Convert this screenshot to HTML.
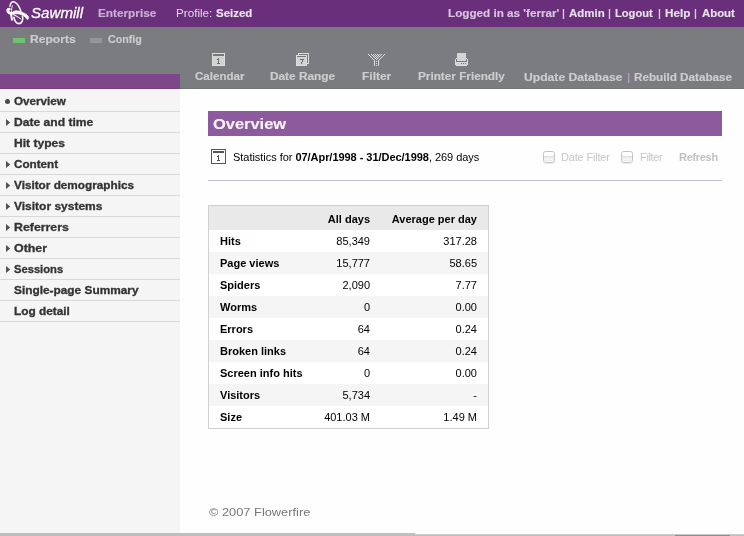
<!DOCTYPE html>
<html>
<head>
<meta charset="utf-8">
<title>Sawmill - Overview</title>
<style>
html,body{margin:0;padding:0;}
body{width:744px;height:536px;overflow:hidden;background:#fefefe;font-family:"Liberation Sans",sans-serif;position:relative;}
#wrap{position:absolute;left:0;top:0;width:744px;height:536px;overflow:hidden;opacity:0.999;will-change:transform;}
.abs{position:absolute;white-space:nowrap;}
.t{position:absolute;white-space:pre;font-family:"Liberation Sans",sans-serif;}
#topbar{left:0;top:0;width:744px;height:27px;background:#6a2f7a;}
#greybar{left:0;top:27px;width:744px;height:62px;background:#7a7c7f;}
#sidebar{left:0;top:89px;width:180px;height:447px;background:#f5f5f5;}
#sidepurple{left:0;top:74px;width:180px;height:15px;background:#7d4789;}
.sep{left:0;width:180px;height:1px;background:#d9d9d9;}
#ovh{left:208px;top:111px;width:514px;height:25px;background:#8d5a9d;}
.cb{top:151px;width:10px;height:10px;border:1px solid #c4c4c4;border-radius:2.5px;background:linear-gradient(#fff 0%,#fdfdfd 38%,#e1e1e1 46%,#e9e9e9 56%,#f4f4f4 68%,#f4f4f4 78%,#e9e9e9 86%,#fff 96%);box-shadow:0 1px 0 #ececec;}
#tbl{left:208px;top:205px;width:279px;height:222px;border:1px solid #cfcfcf;background:#fff;font-size:11px;color:#000;}
.tr{position:absolute;left:0;width:279px;height:22px;line-height:22px;}
.tr.alt{background:#f5f5f5;}
.tr.th{background:#e9e9e9;line-height:26px;font-weight:bold;}
.c1{position:absolute;left:11px;font-weight:bold;}
.c2{position:absolute;right:118px;}
.c3{position:absolute;right:11px;}
</style>
</head>
<body>
<div id="wrap">
<div class="abs" id="topbar"></div>
<div class="abs" id="greybar"></div>
<div class="abs" id="sidebar"></div>
<div class="abs" id="sidepurple"></div>
<div class="abs" style="left:0;top:88px;width:180px;height:1px;background:#793f85;"></div>
<div class="abs" style="left:180px;top:88px;width:564px;height:1px;background:#737477;"></div>
<div class="abs" style="left:0;top:89px;width:180px;height:1px;background:#fefefe;"></div>
<div class="abs" id="ovh"></div>

<!-- logo -->
<svg class="abs" style="left:0;top:0;" width="32" height="27" viewBox="0 0 32 27" fill="none" stroke="#fff" stroke-linecap="round" stroke-linejoin="round">
<path d="M13 11.8 C15 10.2 18 10.4 21.4 12 C24.5 13 27.5 14.8 28.8 17.2 C28.6 18.4 28 19.2 27.2 19.6 C26 17.4 24 15.8 21.5 14.8 C19 13.8 16 13.2 13.6 14.2 Z" fill="#fff" stroke="#fff" stroke-width="0.7"/>
<path d="M9.4 9.2 C8 8.8 7.2 9.8 7.6 11 C8.1 12.4 9.8 13.3 11.6 13.5 L13.6 13" stroke-width="2.5"/>
<path d="M12.4 5.6 C11.4 9 11 14 11.9 19.8" stroke-width="1.1" opacity="0.8"/>
<path d="M11.1 13 C11.1 16 11.5 18 11.9 19.8" stroke-width="1.9"/>
<path d="M10 6.2 C10.2 2.6 12.6 1 14.8 2.2 C17.6 4 20 8 20.9 11.6" stroke-width="1.5"/>
<path d="M13.9 17.4 C14.2 20.6 16.5 23.6 19 23.6 C21.8 23.6 23.4 20 22.5 16.4" stroke-width="1.6"/>
<path d="M13.6 14.8 C16 15.6 18.5 17.4 20.4 18.7" stroke-width="1.1" opacity="0.9"/>
</svg>

<!-- tab markers -->
<div class="abs" style="left:13px;top:38px;width:12px;height:5px;background:#6fc36f;"></div>
<div class="abs" style="left:90px;top:38px;width:12px;height:5px;background:#959597;"></div>

<div class="abs" style="left:628px;top:73px;width:1px;height:10px;background:#b99cc5;"></div>
<div class="abs" style="left:629px;top:73px;width:1px;height:10px;background:#8e8594;"></div>
<!-- toolbar icons -->
<svg class="abs" style="left:212px;top:53px;" width="13" height="13" viewBox="0 0 13 13" shape-rendering="crispEdges">
<rect x="0" y="0" width="13" height="13" fill="#dedede"/><rect x="1" y="1" width="11" height="11" fill="#d2d2d2"/>
<rect x="1" y="1" width="11" height="2" fill="#77777a"/>
<path d="M6 5h1v5h1v1h-3v-1h1v-3h-1v-1h1z" fill="#6d6d70"/>
</svg>
<svg class="abs" style="left:296px;top:53px;" width="13" height="13" viewBox="0 0 13 13" shape-rendering="crispEdges">
<rect x="2" y="0" width="11" height="11" fill="#dedede"/><rect x="3" y="1" width="9" height="9" fill="#77777a"/><rect x="3" y="2" width="8" height="8" fill="#c4c4c4"/>
<rect x="0" y="2" width="11" height="11" fill="#dedede"/><rect x="1" y="3" width="9" height="9" fill="#d2d2d2"/>
<rect x="1" y="3" width="9" height="1" fill="#77777a"/>
<path d="M4 6h4v1h-1v2h-1v2h-1v-2h1v-2h-2z" fill="#6d6d70"/>
</svg>
<svg class="abs" style="left:366px;top:52px;" width="21" height="16" viewBox="0 0 21 16" shape-rendering="crispEdges" fill="#dcdcdc"><rect x="2" y="2" width="1" height="1"/><rect x="18" y="2" width="1" height="1"/><rect x="3" y="3" width="1" height="1"/><rect x="17" y="3" width="1" height="1"/><rect x="4" y="4" width="1" height="1"/><rect x="16" y="4" width="1" height="1"/><rect x="5" y="5" width="1" height="1"/><rect x="15" y="5" width="1" height="1"/><rect x="6" y="6" width="1" height="1"/><rect x="14" y="6" width="1" height="1"/><rect x="7" y="7" width="1" height="1"/><rect x="13" y="7" width="1" height="1"/><rect x="8" y="8" width="1" height="1"/><rect x="12" y="8" width="1" height="1"/><rect x="5" y="2" width="1" height="1"/><rect x="7" y="2" width="1" height="1"/><rect x="9" y="2" width="1" height="1"/><rect x="11" y="2" width="1" height="1"/><rect x="13" y="2" width="1" height="1"/><rect x="15" y="2" width="1" height="1"/><rect x="6" y="3" width="1" height="1"/><rect x="8" y="3" width="1" height="1"/><rect x="10" y="3" width="1" height="1"/><rect x="12" y="3" width="1" height="1"/><rect x="14" y="3" width="1" height="1"/><rect x="7" y="4" width="1" height="1"/><rect x="9" y="4" width="1" height="1"/><rect x="11" y="4" width="1" height="1"/><rect x="13" y="4" width="1" height="1"/><rect x="8" y="5" width="1" height="1"/><rect x="10" y="5" width="1" height="1"/><rect x="12" y="5" width="1" height="1"/><rect x="9" y="6" width="1" height="1"/><rect x="11" y="6" width="1" height="1"/><rect x="10" y="7" width="1" height="1"/><rect x="10" y="9" width="1" height="1"/><rect x="10" y="11" width="1" height="1"/><rect x="10" y="13" width="1" height="1"/><rect x="8" y="8" width="1" height="6"/><rect x="12" y="8" width="1" height="6"/></svg>
<svg class="abs" style="left:455px;top:53px;" width="13" height="13" viewBox="0 0 13 13" shape-rendering="crispEdges">
<path d="M0 6h1v-1h11v1h1v6h-1v1h-11v-1h-1z" fill="#dedede"/>
<rect x="1" y="6" width="11" height="3" fill="#77777a"/>
<rect x="2" y="0" width="9" height="8" fill="#d4d4d4"/>
<rect x="1" y="10" width="11" height="2" fill="#d2d2d2"/>
<rect x="6" y="10" width="1" height="1" fill="#77777a"/><rect x="8" y="10" width="1" height="1" fill="#77777a"/><rect x="10" y="10" width="1" height="1" fill="#77777a"/>
</svg>

<!-- menu separators and bullets -->
<div class="abs sep" style="top:111px;"></div>
<i class="abs" style="left:5px;top:99px;width:5px;height:5px;border-radius:3px;background:#4a4a4a;"></i>
<div class="abs sep" style="top:132px;"></div>
<svg class="abs" style="left:6px;top:119px;" width="5" height="7" viewBox="0 0 5 7"><path d="M0 0L4.2 3.5L0 7z" fill="#505050"/></svg>
<div class="abs sep" style="top:153px;"></div>
<div class="abs sep" style="top:174px;"></div>
<svg class="abs" style="left:6px;top:161px;" width="5" height="7" viewBox="0 0 5 7"><path d="M0 0L4.2 3.5L0 7z" fill="#505050"/></svg>
<div class="abs sep" style="top:195px;"></div>
<svg class="abs" style="left:6px;top:182px;" width="5" height="7" viewBox="0 0 5 7"><path d="M0 0L4.2 3.5L0 7z" fill="#505050"/></svg>
<div class="abs sep" style="top:216px;"></div>
<svg class="abs" style="left:6px;top:203px;" width="5" height="7" viewBox="0 0 5 7"><path d="M0 0L4.2 3.5L0 7z" fill="#505050"/></svg>
<div class="abs sep" style="top:237px;"></div>
<svg class="abs" style="left:6px;top:224px;" width="5" height="7" viewBox="0 0 5 7"><path d="M0 0L4.2 3.5L0 7z" fill="#505050"/></svg>
<div class="abs sep" style="top:258px;"></div>
<svg class="abs" style="left:6px;top:245px;" width="5" height="7" viewBox="0 0 5 7"><path d="M0 0L4.2 3.5L0 7z" fill="#505050"/></svg>
<div class="abs sep" style="top:279px;"></div>
<svg class="abs" style="left:6px;top:266px;" width="5" height="7" viewBox="0 0 5 7"><path d="M0 0L4.2 3.5L0 7z" fill="#505050"/></svg>
<div class="abs sep" style="top:300px;"></div>
<div class="abs sep" style="top:321px;"></div>

<!-- stats line widgets -->
<svg class="abs" style="left:211px;top:149px;" width="15" height="15" viewBox="0 0 15 15" shape-rendering="crispEdges">
<rect x="0.5" y="0.5" width="14" height="14" fill="#fff" stroke="#555"/>
<rect x="2" y="2" width="11" height="2" fill="#555"/>
<path d="M7 6h1v5h1v1h-3v-1h1v-3h-1v-1h1z" fill="#555"/>
</svg>
<div class="abs cb" style="left:543px;"></div>
<div class="abs cb" style="left:621px;"></div>
<div class="abs" style="left:208px;top:180px;width:514px;height:1px;background:#c9bfd2;"></div>

<!-- table -->
<div class="abs" id="tbl">
<div class="tr th" style="top:0;height:24px;"><span class="c2">All days</span><span class="c3">Average per day</span></div>
<div class="tr" style="top:24px;"><span class="c1">Hits</span><span class="c2">85,349</span><span class="c3">317.28</span></div>
<div class="tr alt" style="top:46px;"><span class="c1">Page views</span><span class="c2">15,777</span><span class="c3">58.65</span></div>
<div class="tr" style="top:68px;"><span class="c1">Spiders</span><span class="c2">2,090</span><span class="c3">7.77</span></div>
<div class="tr alt" style="top:90px;"><span class="c1">Worms</span><span class="c2">0</span><span class="c3">0.00</span></div>
<div class="tr" style="top:112px;"><span class="c1">Errors</span><span class="c2">64</span><span class="c3">0.24</span></div>
<div class="tr alt" style="top:134px;"><span class="c1">Broken links</span><span class="c2">64</span><span class="c3">0.24</span></div>
<div class="tr" style="top:156px;"><span class="c1">Screen info hits</span><span class="c2">0</span><span class="c3">0.00</span></div>
<div class="tr alt" style="top:178px;"><span class="c1">Visitors</span><span class="c2">5,734</span><span class="c3">-</span></div>
<div class="tr" style="top:200px;"><span class="c1">Size</span><span class="c2">401.03 M</span><span class="c3">1.49 M</span></div>
</div>

<!-- all text -->
<div class="t" style="left:30.9px;top:3px;font-size:15.5px;line-height:19px;color:#fff;font-style:italic;transform:scaleX(0.975);transform-origin:0 0;-webkit-text-stroke:0.3px;">Sawmill</div>
<div class="t" style="left:98.0px;top:6px;font-size:10.5px;line-height:14px;color:#c9b2d1;font-weight:bold;-webkit-text-stroke:0.15px;transform:scaleX(1.122);transform-origin:0 0;">Enterprise</div>
<div class="t" style="left:175.8px;top:6px;font-size:10.5px;line-height:14px;color:#e3d8e7;transform:scaleX(1.11);transform-origin:0 0;">Profile:</div>
<div class="t" style="left:216.4px;top:6px;font-size:10.5px;line-height:14px;color:#eae4ec;font-weight:bold;-webkit-text-stroke:0.15px;transform:scaleX(1.091);transform-origin:0 0;">Seized</div>
<div class="t" style="left:448.2px;top:6px;font-size:10.5px;line-height:14px;color:#d9c6df;font-weight:bold;-webkit-text-stroke:0.15px;transform:scaleX(1.112);transform-origin:0 0;">Logged in as 'ferrar'</div>
<div class="t" style="left:562px;top:6px;font-size:10.5px;line-height:14px;color:#d9c6df;font-weight:bold;">|</div>
<div class="t" style="left:568.9px;top:6px;font-size:10.5px;line-height:14px;color:#e6e0e8;font-weight:bold;-webkit-text-stroke:0.15px;transform:scaleX(1.091);transform-origin:0 0;">Admin</div>
<div class="t" style="left:608px;top:6px;font-size:10.5px;line-height:14px;color:#d9c6df;font-weight:bold;">|</div>
<div class="t" style="left:615.0px;top:6px;font-size:10.5px;line-height:14px;color:#e6e0e8;font-weight:bold;-webkit-text-stroke:0.15px;transform:scaleX(1.06);transform-origin:0 0;">Logout</div>
<div class="t" style="left:658px;top:6px;font-size:10.5px;line-height:14px;color:#d9c6df;font-weight:bold;">|</div>
<div class="t" style="left:664.9px;top:6px;font-size:10.5px;line-height:14px;color:#e6e0e8;font-weight:bold;-webkit-text-stroke:0.15px;transform:scaleX(1.114);transform-origin:0 0;">Help</div>
<div class="t" style="left:694px;top:6px;font-size:10.5px;line-height:14px;color:#d9c6df;font-weight:bold;">|</div>
<div class="t" style="left:701.5px;top:6px;font-size:10.5px;line-height:14px;color:#e6e0e8;font-weight:bold;-webkit-text-stroke:0.15px;transform:scaleX(1.083);transform-origin:0 0;">About</div>
<div class="t" style="left:29.7px;top:32px;font-size:10.5px;line-height:14px;color:#cdcdcd;font-weight:bold;-webkit-text-stroke:0.15px;transform:scaleX(1.153);transform-origin:0 0;">Reports</div>
<div class="t" style="left:107.8px;top:32px;font-size:10.5px;line-height:14px;color:#cdcdcd;font-weight:bold;-webkit-text-stroke:0.15px;transform:scaleX(1.018);transform-origin:0 0;">Config</div>
<div class="t" style="left:194.5px;top:69px;font-size:10.5px;line-height:14px;color:#cdcdcd;font-weight:bold;-webkit-text-stroke:0.15px;transform:scaleX(1.102);transform-origin:0 0;">Calendar</div>
<div class="t" style="left:269.7px;top:69px;font-size:10.5px;line-height:14px;color:#cdcdcd;font-weight:bold;-webkit-text-stroke:0.15px;transform:scaleX(1.126);transform-origin:0 0;">Date Range</div>
<div class="t" style="left:361.7px;top:69px;font-size:10.5px;line-height:14px;color:#cdcdcd;font-weight:bold;-webkit-text-stroke:0.15px;transform:scaleX(1.14);transform-origin:0 0;">Filter</div>
<div class="t" style="left:418.0px;top:69px;font-size:10.5px;line-height:14px;color:#cdcdcd;font-weight:bold;-webkit-text-stroke:0.15px;transform:scaleX(1.119);transform-origin:0 0;">Printer Friendly</div>
<div class="t" style="left:524.3px;top:70px;font-size:10.5px;line-height:14px;color:#cdcdcd;font-weight:bold;-webkit-text-stroke:0.15px;transform:scaleX(1.156);transform-origin:0 0;">Update Database</div>
<div class="t" style="left:634.1px;top:70px;font-size:10.5px;line-height:14px;color:#cdcdcd;font-weight:bold;-webkit-text-stroke:0.15px;transform:scaleX(1.113);transform-origin:0 0;">Rebuild Database</div>
<div class="t" style="left:14px;top:94px;font-size:10.5px;line-height:14px;color:#333;font-weight:bold;-webkit-text-stroke:0.3px;transform:scaleX(1.111);transform-origin:0 0;">Overview</div>
<div class="t" style="left:14px;top:115px;font-size:10.5px;line-height:14px;color:#333;font-weight:bold;-webkit-text-stroke:0.3px;transform:scaleX(1.151);transform-origin:0 0;">Date and time</div>
<div class="t" style="left:14px;top:136px;font-size:10.5px;line-height:14px;color:#333;font-weight:bold;-webkit-text-stroke:0.3px;transform:scaleX(1.151);transform-origin:0 0;">Hit types</div>
<div class="t" style="left:14px;top:157px;font-size:10.5px;line-height:14px;color:#333;font-weight:bold;-webkit-text-stroke:0.3px;transform:scaleX(1.113);transform-origin:0 0;">Content</div>
<div class="t" style="left:14px;top:178px;font-size:10.5px;line-height:14px;color:#333;font-weight:bold;-webkit-text-stroke:0.3px;transform:scaleX(1.12);transform-origin:0 0;">Visitor demographics</div>
<div class="t" style="left:14px;top:199px;font-size:10.5px;line-height:14px;color:#333;font-weight:bold;-webkit-text-stroke:0.3px;transform:scaleX(1.142);transform-origin:0 0;">Visitor systems</div>
<div class="t" style="left:14px;top:220px;font-size:10.5px;line-height:14px;color:#333;font-weight:bold;-webkit-text-stroke:0.3px;transform:scaleX(1.176);transform-origin:0 0;">Referrers</div>
<div class="t" style="left:14px;top:241px;font-size:10.5px;line-height:14px;color:#333;font-weight:bold;-webkit-text-stroke:0.3px;transform:scaleX(1.179);transform-origin:0 0;">Other</div>
<div class="t" style="left:14px;top:262px;font-size:10.5px;line-height:14px;color:#333;font-weight:bold;-webkit-text-stroke:0.3px;transform:scaleX(1.065);transform-origin:0 0;">Sessions</div>
<div class="t" style="left:14px;top:283px;font-size:10.5px;line-height:14px;color:#333;font-weight:bold;-webkit-text-stroke:0.3px;transform:scaleX(1.129);transform-origin:0 0;">Single-page Summary</div>
<div class="t" style="left:14px;top:304px;font-size:10.5px;line-height:14px;color:#333;font-weight:bold;-webkit-text-stroke:0.3px;transform:scaleX(1.127);transform-origin:0 0;">Log detail</div>
<div class="t" style="left:212.6px;top:115px;font-size:14.5px;line-height:18px;color:#f6f2f7;font-weight:bold;-webkit-text-stroke:0.15px;transform:scaleX(1.134);transform-origin:0 0;">Overview</div>
<div class="t" style="left:233px;top:150px;font-size:11px;line-height:15px;color:#000;letter-spacing:-0.04px;">Statistics for <b>07/Apr/1998 - 31/Dec/1998</b>, 269 days</div>
<div class="t" style="left:561px;top:150px;font-size:11px;line-height:15px;color:#c6c6c6;letter-spacing:-0.18px;">Date Filter</div>
<div class="t" style="left:640px;top:150px;font-size:11px;line-height:15px;color:#c6c6c6;letter-spacing:-0.34px;">Filter</div>
<div class="t" style="left:679px;top:150px;font-size:11px;line-height:15px;color:#c0c0c0;font-weight:bold;letter-spacing:-0.3px;">Refresh</div>
<div class="t" style="left:209.0px;top:505px;font-size:11.5px;line-height:15px;color:#777;transform:scaleX(1.114);transform-origin:0 0;">© 2007 Flowerfire</div>

<!-- bottom strip -->
<div class="abs" style="left:0;top:533px;width:415px;height:3px;background:#bebebe;"></div>
<div class="abs" style="left:415px;top:534px;width:329px;height:2px;background:linear-gradient(#cfcfcf,#bdbdbd);"></div>
<div class="abs" style="left:675px;top:535px;width:55px;height:1px;background:#8e8e8e;"></div>
</div>
</body>
</html>
